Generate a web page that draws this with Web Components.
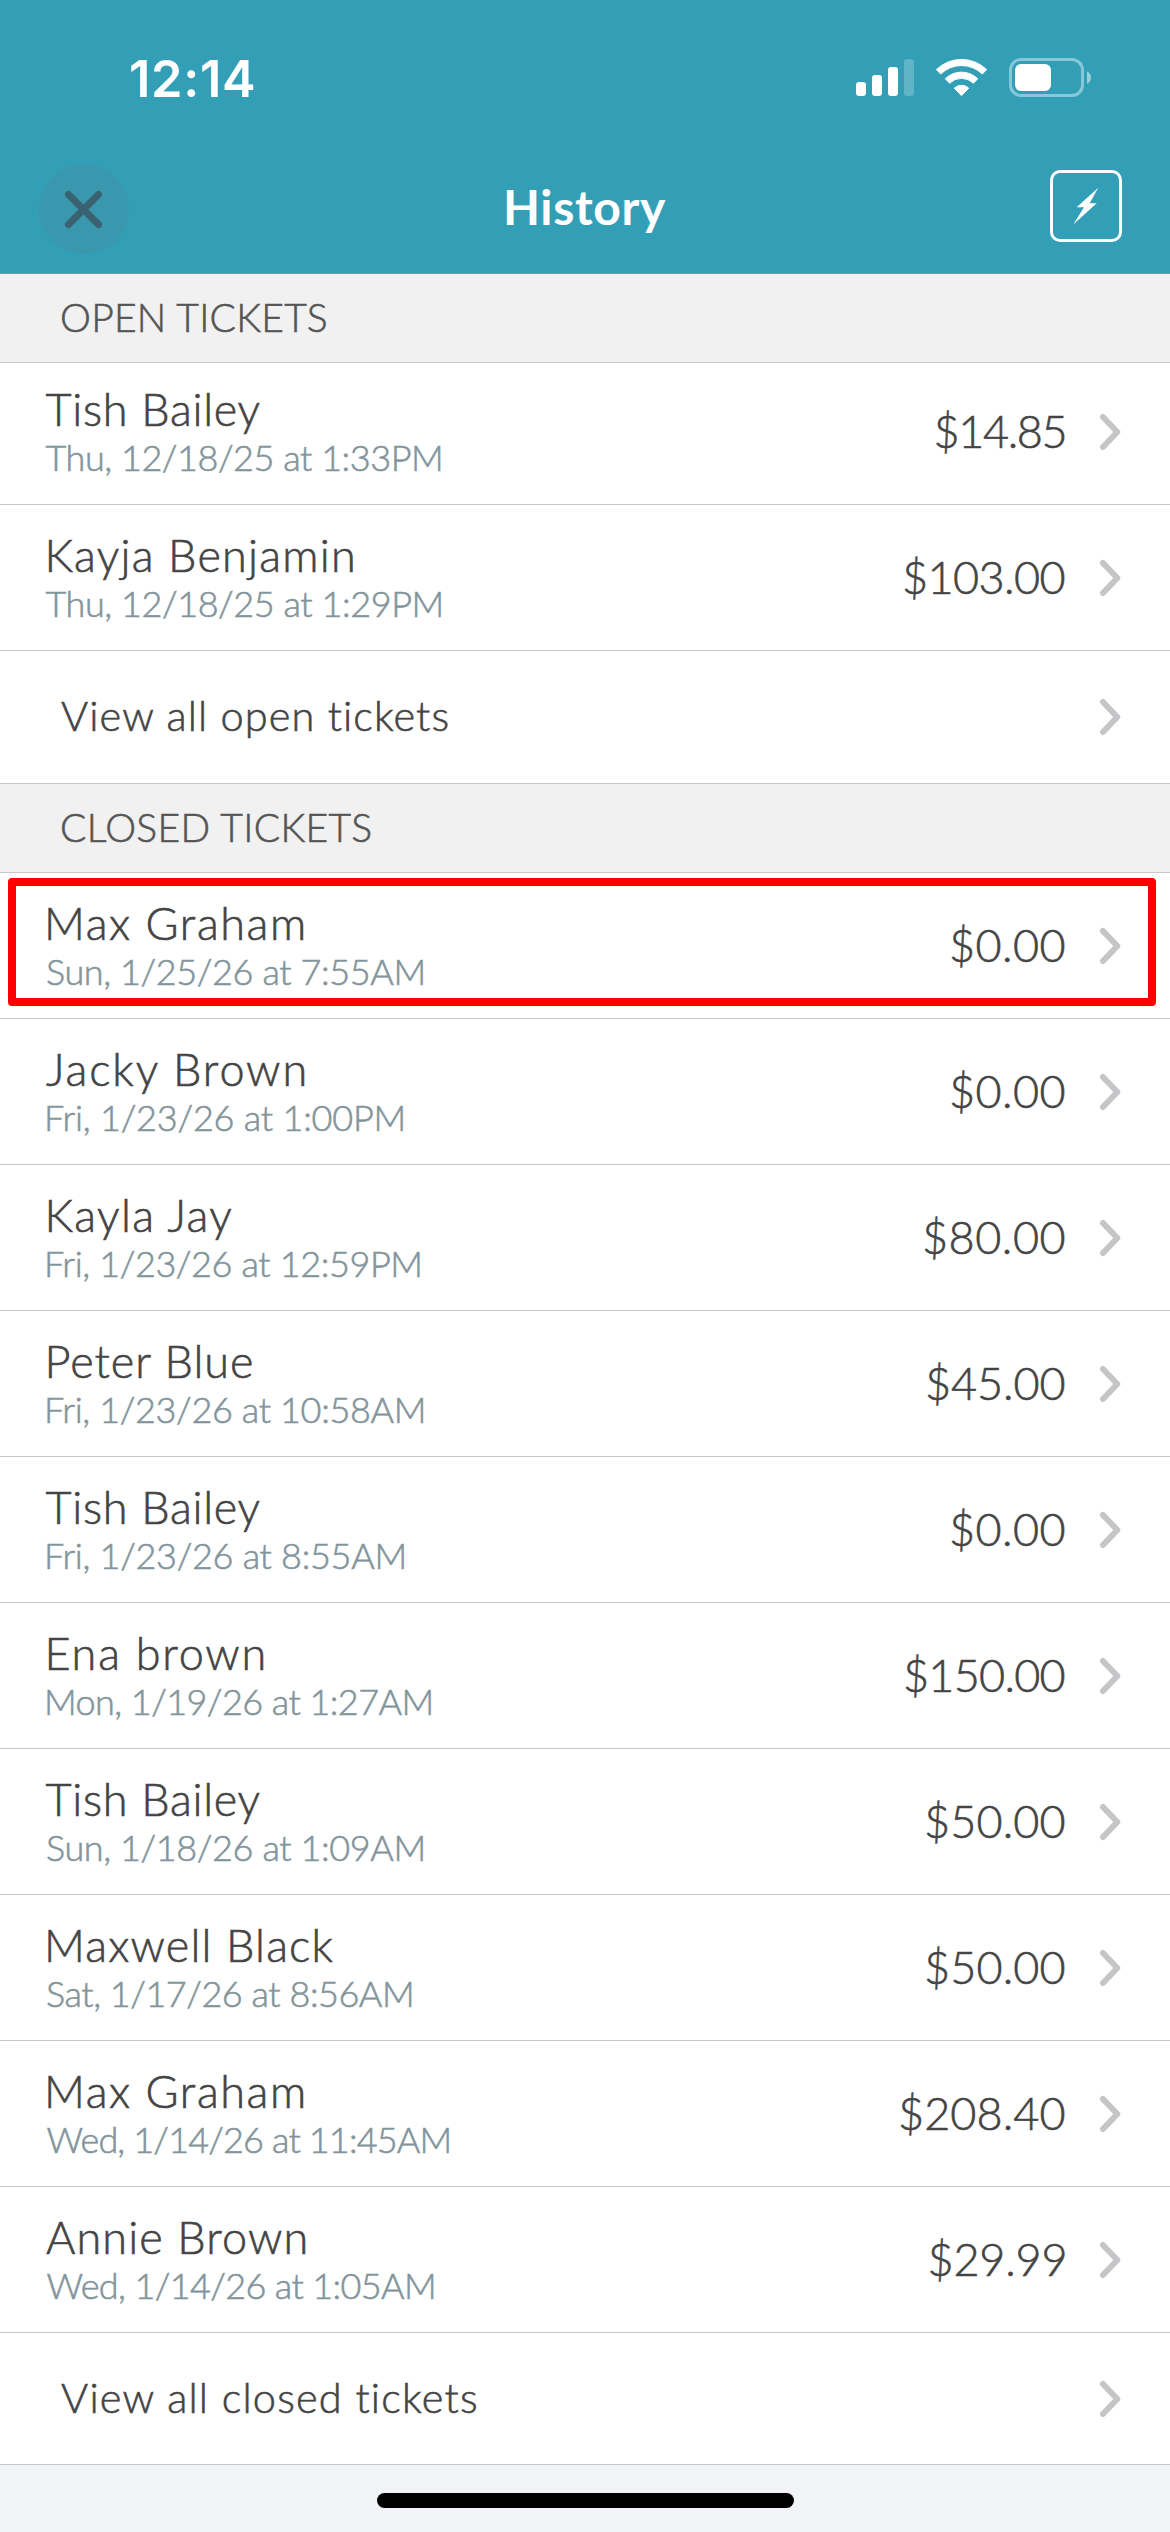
<!DOCTYPE html>
<html lang="en">
<head>
<meta charset="utf-8">
<title>History</title>
<style>
  html, body { margin: 0; padding: 0; }
  body { width: 1170px; height: 2532px; overflow: hidden; background: #fff; font-family: Lato, "Open Sans", sans-serif; font-weight: 300; }
</style>
</head>
<body>
<history-screen></history-screen>
<script>
const make = (tag, html, setup) => customElements.define(tag, class extends HTMLElement {
  connectedCallback() {
    if (this.shadowRoot) return;
    const root = this.attachShadow({ mode: 'open' });
    root.innerHTML = html;
    if (setup) setup(this, root);
  }
});

// A single line of text whose ink fills exactly the given width (attribute w).
const pen = document.createElement('canvas').getContext('2d');
make('fit-text', `
<style>:host{display:block;white-space:nowrap;line-height:1.2;flex:none} span{display:block;-webkit-text-stroke:var(--stroke,.6px) currentColor}</style>
<span></span>`, (el, root) => {
  const span = root.querySelector('span');
  const text = el.getAttribute('text');
  span.textContent = text;
  const cs = getComputedStyle(el);
  pen.font = cs.fontWeight + ' ' + cs.fontSize + ' ' + cs.fontFamily;
  const m = pen.measureText(text);
  const w = parseFloat(el.getAttribute('w'));
  const ls = (w - m.actualBoundingBoxRight - m.actualBoundingBoxLeft) / (text.length - 1);
  span.style.letterSpacing = ls + 'px';
  span.style.marginLeft = m.actualBoundingBoxLeft + 'px';
  el.style.width = w + 'px';
});

make('chevron-icon', `
<style>:host{display:block;width:22px;height:40px;flex:none} svg{display:block}</style>
<svg width="22" height="40" viewBox="0 0 22 40" fill="none" stroke="#c5c5c7" stroke-width="6" stroke-linecap="round" stroke-linejoin="round"><path d="M4 5 18.3 20 4 35"/></svg>`);

make('status-bar', `
<style>
:host{display:flex;height:146px;box-sizing:border-box;justify-content:space-between;align-items:flex-start;padding:48px 76px 0 131px;color:#fff}
fit-text{font:600 50.5px Inter,sans-serif;--stroke:0px}
svg{display:block;margin-top:2px}
</style>
<fit-text text="12:14" w="123"></fit-text>
<svg width="242" height="56" viewBox="0 0 242 56" fill="#fff">
  <rect x="4" y="32" width="10" height="14" rx="3"/>
  <rect x="20" y="25" width="10" height="21" rx="3"/>
  <rect x="36" y="17" width="10" height="29" rx="3"/>
  <rect x="52" y="9" width="10" height="37" rx="3" opacity=".22"/>
  <path d="M84.400 19.600 A36 36 0 0 1 134.600 19.600 L130.300 24 A29.800 29.800 0 0 0 88.700 24 Z" stroke="#fff" stroke-width="1" stroke-linejoin="round"/>
  <path d="M93.300 28.800 A23 23 0 0 1 125.700 28.800 L121.400 33.200 A17 17 0 0 0 97.600 33.200 Z" stroke="#fff" stroke-width="1" stroke-linejoin="round"/>
  <path d="M102.200 38.200 A10.600 10.600 0 0 1 116.800 38.200 L109.500 45.600 Z" stroke="#fff" stroke-width="1" stroke-linejoin="round"/>
  <rect x="158.500" y="9.500" width="72" height="36" rx="10.500" fill="none" stroke="#fff" stroke-width="3" opacity=".42"/>
  <rect x="163" y="14" width="36" height="27" rx="6"/>
  <path d="M235 21.200c5.300 2.400 5.300 10.200 0 12.600z" opacity=".5"/>
</svg>`);

make('nav-bar', `
<style>
:host{display:flex;height:125px;box-sizing:border-box;justify-content:space-between;align-items:center;padding:0 48px 0 39px;color:#fff}
.close{display:flex;width:90px;height:90px;border-radius:50%;background:#3998ae}
.new{margin-bottom:5px;width:66px;height:66px;border:3px solid #fff;border-radius:10px}
svg{display:block}
fit-text{font-weight:700;font-size:48px;line-height:56px;margin:0 0 4px -7px;--stroke:0px}
</style>
<div class="close"><svg width="90" height="90" viewBox="0 0 90 90" fill="none" stroke="#3b6270" stroke-width="7" stroke-linecap="round"><path d="M29.500 30.500 59.500 60.500M59.500 30.500 29.500 60.500"/></svg></div>
<fit-text text="History" w="160"></fit-text>
<div class="new"><svg width="66" height="66" viewBox="0 0 66 66" fill="#fff"><path d="M45.300 14.700 36.700 30.300H43.700L20.300 51.600 31 34.300H23.600z"/></svg></div>`);

make('section-head', `
<style>
:host{display:flex;flex-direction:column;justify-content:flex-end;height:89px;box-sizing:border-box;padding:0 0 21px 62px;background:#f1f1f1;border-bottom:1px solid #c8c8c8;color:#555;font-size:39px}
</style>
<slot></slot>`);

make('ticket-row', `
<style>
:host{display:flex;align-items:flex-end;justify-content:space-between;height:var(--h,146px);box-sizing:border-box;border-bottom:1px solid #c8c8c8;padding-right:49.500px;background:#fff;color:#444}
.who{display:flex;flex-direction:column;padding-bottom:25px}
.name{font-size:45px;height:54px}
.date{font-size:36px;height:43px;color:#83959c}
.end{display:flex;align-items:flex-end;gap:34px}
.amount{font-size:45px;height:54px;margin-bottom:46px}
chevron-icon{margin-bottom:52px}
</style>
<div class="who"></div><div class="end"><chevron-icon></chevron-icon></div>`, (el, root) => {
  const line = (cls, key) => {
    const [text, a, b] = el.getAttribute(key).split('|');
    const n = document.createElement('fit-text');
    n.className = cls;
    n.setAttribute('text', text); n.setAttribute('w', b - a);
    if (cls !== 'amount') n.style.marginLeft = a + 'px';
    return n;
  };
  root.querySelector('.who').append(line('name', 'name'), line('date', 'date'));
  root.querySelector('.end').prepend(line('amount', 'amount'));
});

make('link-row', `
<style>
:host{display:flex;align-items:center;justify-content:space-between;height:var(--h,133px);box-sizing:border-box;border-bottom:1px solid #c8c8c8;padding:0 49.500px 0 61px;background:#fff;color:#444;font-size:41.500px}
.slot{margin-bottom:2px}
</style>
<div class="slot"><slot></slot></div><chevron-icon></chevron-icon>`);

// Annotation frame drawn over the row it wraps.
make('row-callout', `
<style>
:host{display:block;position:relative}
i{position:absolute;left:8px;top:5px;width:1148px;height:128px;box-sizing:border-box;border:8px solid #f00;border-radius:4px}
</style>
<slot></slot><i></i>`);

make('home-bar', `
<style>:host{display:flex;justify-content:center;height:67px;background:#f2f3f6} div{width:417px;height:15px;margin-top:28px;border-radius:8px;background:#000}</style>
<div></div>`);

make('history-screen', `
<style>
:host{display:flex;flex-direction:column;width:1170px;height:2532px;background:#fff}
header{background:#329fb7;border-bottom:1px solid #8a9396;height:273px}
</style>
<header><status-bar></status-bar><nav-bar></nav-bar></header>
<section-head><fit-text text="OPEN TICKETS" w="265"></fit-text></section-head>
<ticket-row style="--h:142px" name="Tish Bailey|45.5|259.5" date="Thu, 12/18/25 at 1:33PM|45.5|440" amount="$14.85|936|1064"></ticket-row>
<ticket-row name="Kayja Benjamin|48.5|353" date="Thu, 12/18/25 at 1:29PM|45.5|440.5" amount="$103.00|904|1063.500"></ticket-row>
<link-row><fit-text text="View all open tickets" w="388"></fit-text></link-row>
<section-head><fit-text text="CLOSED TICKETS" w="309.5"></fit-text></section-head>
<row-callout><ticket-row name="Max Graham|48|303" date="Sun, 1/25/26 at 7:55AM|47|422.5" amount="$0.00|951|1063.500"></ticket-row></row-callout>
<ticket-row name="Jacky Brown|46|305.5" date="Fri, 1/23/26 at 1:00PM|47|402.5" amount="$0.00|951|1063.500"></ticket-row>
<ticket-row name="Kayla Jay|48.5|232.7" date="Fri, 1/23/26 at 12:59PM|47|419.300" amount="$80.00|924|1063.500"></ticket-row>
<ticket-row name="Peter Blue|48.5|253" date="Fri, 1/23/26 at 10:58AM|47|422.700" amount="$45.00|927|1063.500"></ticket-row>
<ticket-row name="Tish Bailey|45.5|259.5" date="Fri, 1/23/26 at 8:55AM|47|403.500" amount="$0.00|951|1063.500"></ticket-row>
<ticket-row name="Ena brown|48.5|263.5" date="Mon, 1/19/26 at 1:27AM|47|430.500" amount="$150.00|905|1063.500"></ticket-row>
<ticket-row name="Tish Bailey|45.5|259.5" date="Sun, 1/18/26 at 1:09AM|47|422.500" amount="$50.00|926|1063.500"></ticket-row>
<ticket-row name="Maxwell Black|48|332.500" date="Sat, 1/17/26 at 8:56AM|47|411" amount="$50.00|926|1063.500"></ticket-row>
<ticket-row name="Max Graham|48|303" date="Wed, 1/14/26 at 11:45AM|46.5|448.500" amount="$208.40|900|1063.500"></ticket-row>
<ticket-row name="Annie Brown|46|305.5" date="Wed, 1/14/26 at 1:05AM|46.5|433" amount="$29.99|930|1064"></ticket-row>
<link-row style="--h:132px"><fit-text text="View all closed tickets" w="416.5"></fit-text></link-row>
<home-bar></home-bar>`);
</script>
</body>
</html>
